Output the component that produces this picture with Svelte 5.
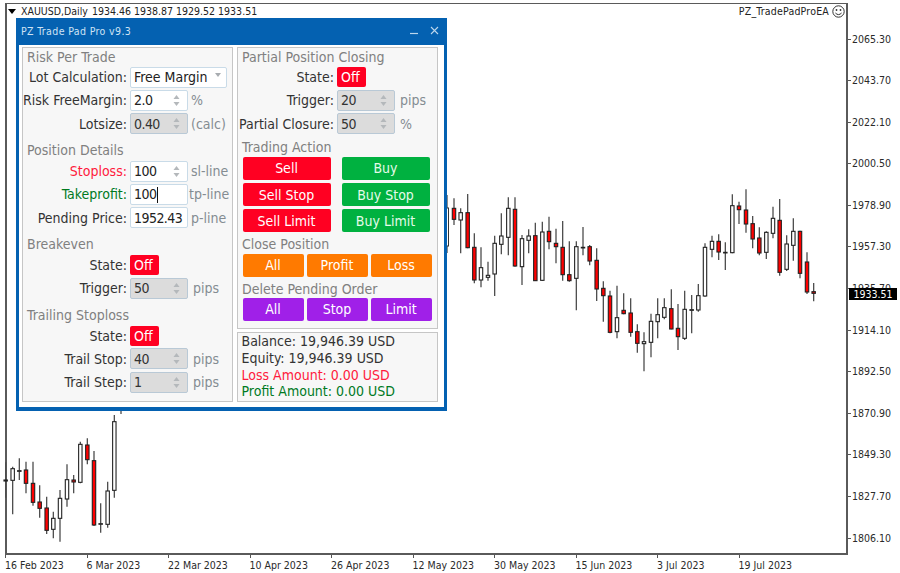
<script>
  // [x, wickTop, wickBottom, bodyTop, bodyBottom, red] in reference crop units (3x), grouped by crop origin
  const crop = (ox, oy, rows) =>
    rows.map(([x, wt, wb, bt, bb, red]) => ({
      x: ox + x / 3,
      wt: oy + wt / 3,
      wb: oy + wb / 3,
      bt: oy + bt / 3,
      bh: Math.max((bb - bt) / 3, 0.6),
      red: !!red
    }));

  const candles = [
    ...crop(0, 405, [
      [17,172,278,225,228,0],[38,185,328,191,226,0],[58,160,225,197,199,0],[78,170,265,195,235,1],
      [99,170,302,235,292,1],[119,241,338,291,310,1],[140,275,387,309,376,1],[160,320,400,340,373,0],
      [180,255,410,280,340,0],[201,178,305,224,282,0],[221,210,265,225,231,1],[241,110,235,118,232,0],
      [262,100,178,120,164,1],[282,138,363,167,360,1],[302,295,383,356,357,0],[323,230,368,258,358,0],
      [343,30,278,50,256,0]
    ]),
    ...crop(445, 170, [
      [27,85,165,115,148,1],[47,115,250,128,150,0],[68,72,235,128,233,1],
      [88,190,340,232,330,1],[108,232,352,293,330,0],[129,275,332,316,322,0],[149,197,378,220,312,0],
      [169,130,253,198,223,0],[190,82,256,115,202,0],[210,82,290,118,288,1],[231,195,345,206,290,0],
      [251,178,250,198,211,0],[271,158,333,197,332,1],[292,155,333,186,331,0],[312,140,238,184,215,1],
      [333,176,280,220,230,1],[353,153,332,232,314,1],[373,214,335,314,332,1],[394,214,421,230,325,0],
      [414,171,256,232,233,0],[434,225,286,230,273,1],[455,235,393,271,357,1],[475,334,455,355,377,1],
      [495,362,490,378,487,1],[516,347,505,443,485,0],[536,370,433,421,431,1],[557,385,500,429,487,1],
      [577,463,548,485,520,1],[597,487,604,515,521,0],[618,431,562,454,517,0],[638,385,505,434,455,0],
      [658,385,448,413,442,0],[679,358,478,416,477,1]
    ]),
    ...crop(665, 280, [
      [39,72,210,145,170,1],[59,32,180,88,175,0],[80,45,160,89,91,0]
    ]),
    ...crop(670, 170, [
      [85,342,425,377,420,0],[105,220,380,232,378,0],[126,197,262,214,238,0],[146,193,270,214,246,1],
      [166,217,300,247,248,0],[187,73,250,107,248,0],[207,95,162,108,119,1],[228,58,188,120,162,1],
      [248,138,235,161,207,1],[268,172,256,204,249,1],[289,184,267,187,247,0],[309,110,205,145,190,0],
      [329,87,317,151,307,1],[350,196,303,222,298,0],[370,145,272,184,226,0],[390,182,325,184,310,1],
      [411,247,372,276,366,1],[431,339,394,365,370,1]
    ])
  ];

  const prices = ['2065.30','2043.70','2022.10','2000.50','1978.90','1957.30','1935.70','1914.10','1892.50','1870.90','1849.30','1827.70','1806.10'];
  const dates = ['16 Feb 2023','6 Mar 2023','22 Mar 2023','10 Apr 2023','26 Apr 2023','12 May 2023','30 May 2023','15 Jun 2023','3 Jul 2023','19 Jul 2023'];
</script>

{#snippet spin()}
  <svg class="spin" width="7" height="13" viewBox="0 0 7 13" aria-hidden="true">
    <path d="M3.5 1 L6.5 5 H0.5 Z M3.5 12 L0.5 8 H6.5 Z" fill="#b4b8bb" />
  </svg>
{/snippet}

{#snippet numField(label, value, unit, opts = {})}
  <div class="row">
    <span class="lab {opts.cls ?? ''}">{label}</span>
    <div class="field {opts.off ? 'off' : ''}">
      <span class="val num">{value}</span>{#if !opts.nospin}{@render spin()}{/if}
    </div>
    <span class="unit {opts.ucls ?? ''}">{unit}</span>
  </div>
{/snippet}

{#snippet stateRow()}
  <div class="row">
    <span class="lab">State:</span>
    <span class="state">Off</span>
  </div>
{/snippet}

<div class="terminal">
  <div class="chart">
    <svg class="candles" viewBox="7 4 839 549" preserveAspectRatio="none" aria-hidden="true">
      <line x1="121" y1="410" x2="121" y2="414" class="wick" />
      <line x1="447" y1="195" x2="447" y2="253" class="wick" />
      <rect x="445.5" y="208" width="3" height="38" fill="#fff" stroke="#333" />
      {#each candles as c}
        <line x1={c.x} y1={c.wt} x2={c.x} y2={c.wb} class="wick" />
        <rect x={c.x - 1.7} y={c.bt} width="3.4" height={c.bh} fill={c.red ? '#f00' : '#fff'} stroke="#222" stroke-width="1.1" />
      {/each}
    </svg>
    <div class="quote">
      <i class="tri"></i>
      <span>XAUUSD,Daily</span>
      <span>1934.46 1938.87 1929.52 1933.51</span>
    </div>
    <div class="ea">
      <span>PZ_TradePadProEA</span>
      <svg width="13" height="13" viewBox="0 0 13 13" aria-hidden="true">
        <circle cx="6.5" cy="6.5" r="5.7" fill="none" stroke="#333" />
        <circle cx="4.5" cy="5" r="0.9" fill="#333" />
        <circle cx="8.5" cy="5" r="0.9" fill="#333" />
        <path d="M3.4 8 Q6.5 11.2 9.6 8" fill="none" stroke="#333" />
      </svg>
    </div>
  </div>

  <div class="price-axis">
    {#each prices as p}
      <div class="price">{p}</div>
    {/each}
  </div>
  <div class="last">1933.51</div>

  <div class="date-axis">
    {#each dates as d}
      <div class="date">{d}</div>
    {/each}
  </div>

  <section class="window">
    <header class="title">
      <span>PZ Trade Pad Pro v9.3</span>
      <div class="ctrls">
        <svg width="9" height="9" viewBox="0 0 9 9" aria-hidden="true"><path d="M0 7.5 H8" stroke="#bcd6ec" stroke-width="1.2" /></svg>
        <svg width="9" height="9" viewBox="0 0 9 9" aria-hidden="true"><path d="M1 1 L8 8 M8 1 L1 8" stroke="#bcd6ec" stroke-width="1.1" /></svg>
      </div>
    </header>
    <div class="client">
      <div class="panel left">
        <h3>Risk Per Trade</h3>
        <div class="row">
          <span class="lab">Lot Calculation:</span>
          <div class="field select"><span class="val">Free Margin</span><i class="caret"></i></div>
        </div>
        {@render numField('Risk FreeMargin:', '2.0', '%')}
        {@render numField('Lotsize:', '0.40', '(calc)', { off: true })}

        <h3 class="gap">Position Details</h3>
        {@render numField('Stoploss:', '100', 'sl-line', { cls: 'red' })}
        <div class="row">
          <span class="lab green">Takeprofit:</span>
          <div class="field"><span class="val num">100</span><i class="cursor"></i></div>
          <span class="unit tight">tp-line</span>
        </div>
        {@render numField('Pending Price:', '1952.43', 'p-line', { nospin: true })}

        <h3 class="gap">Breakeven</h3>
        {@render stateRow()}
        {@render numField('Trigger:', '50', 'pips', { off: true, ucls: 'wide' })}

        <h3 class="gap">Trailing Stoploss</h3>
        {@render stateRow()}
        {@render numField('Trail Stop:', '40', 'pips', { off: true, ucls: 'wide' })}
        {@render numField('Trail Step:', '1', 'pips', { off: true, ucls: 'wide' })}
      </div>

      <div class="stack">
        <div class="panel right">
          <h3>Partial Position Closing</h3>
          {@render stateRow()}
          {@render numField('Trigger:', '20', 'pips', { off: true, ucls: 'wide' })}
          {@render numField('Partial Closure:', '50', '%', { off: true, ucls: 'wide' })}

          <h3 class="sub">Trading Action</h3>
          <div class="two">
            <button class="sell">Sell</button><button class="buy">Buy</button>
            <button class="sell">Sell Stop</button><button class="buy">Buy Stop</button>
            <button class="sell">Sell Limit</button><button class="buy">Buy Limit</button>
          </div>

          <h3 class="sub2">Close Position</h3>
          <div class="three">
            <button class="orange">All</button><button class="orange">Profit</button><button class="orange">Loss</button>
          </div>

          <h3 class="sub3">Delete Pending Order</h3>
          <div class="three">
            <button class="purple">All</button><button class="purple">Stop</button><button class="purple">Limit</button>
          </div>
        </div>
        <div class="panel info">
          <div>Balance: 19,946.39 USD</div>
          <div>Equity: 19,946.39 USD</div>
          <div class="red">Loss Amount: 0.00 USD</div>
          <div class="green">Profit Amount: 0.00 USD</div>
        </div>
      </div>
    </div>
  </section>
</div>

<style>
  :global(body) {
    margin: 0;
    background: #fff;
  }
  .terminal {
    position: relative;
    width: 900px;
    height: 573px;
    overflow: hidden;
    background: #fff;
    display: grid;
    grid-template-columns: 843px 1fr;
    grid-template-rows: 552px 1fr;
    padding: 3px 0 0 5px;
    box-sizing: border-box;
    font-family: "DejaVu Sans", "Noto Sans", sans-serif;
    font-stretch: condensed;
    color: #2a2a2a;
  }
  .chart {
    position: relative;
    border: 1px solid #5a5a5a;
    border-width: 1px 2px 2px 2px;
    box-sizing: border-box;
    display: flex;
    justify-content: space-between;
    align-items: flex-start;
    font-size: 10.5px;
    color: #222;
  }
  .candles {
    position: absolute;
    inset: 0;
    width: 100%;
    height: 100%;
    overflow: visible;
  }
  .wick {
    stroke: #4d4d4d;
    stroke-width: 1.3;
  }
  .quote,
  .ea {
    position: relative;
    display: flex;
    align-items: center;
    height: 14px;
  }
  .quote {
    padding-left: 1px;
  }
  .quote span:nth-of-type(2) {
    margin-left: 4px;
  }
  .tri {
    width: 0;
    height: 0;
    border: 4px solid transparent;
    border-top: 5px solid #000;
    border-bottom: 0;
    margin-right: 5px;
  }
  .ea {
    gap: 3px;
    padding-right: 1px;
    letter-spacing: 0.2px;
  }
  .price-axis {
    display: flex;
    flex-direction: column;
    padding-top: 29.5px;
  }
  .price {
    position: relative;
    height: 41.6px;
    flex: none;
    font-size: 10.5px;
    line-height: 13px;
    padding-left: 4px;
    box-sizing: border-box;
  }
  .price::before {
    content: "";
    position: absolute;
    left: 0;
    top: 6px;
    width: 3px;
    height: 1px;
    background: #555;
  }
  .last {
    position: absolute;
    left: 849px;
    top: 288px;
    width: 48px;
    height: 12px;
    background: #000;
    color: #fff;
    font-size: 10.5px;
    line-height: 12px;
    text-align: center;
  }
  .date-axis {
    grid-column: 1 / 3;
    display: flex;
    padding-top: 1px;
  }
  .date {
    position: relative;
    width: 81.5px;
    flex: none;
    font-size: 10.5px;
    line-height: 13px;
    padding-top: 3px;
    white-space: nowrap;
  }
  .date::before {
    content: "";
    position: absolute;
    left: 0;
    top: -1px;
    width: 1px;
    height: 3px;
    background: #555;
  }

  .window {
    position: absolute;
    left: 16px;
    top: 18px;
    width: 431px;
    height: 393px;
    box-sizing: border-box;
    background: #0461b1;
    padding: 0 3px 4px;
    display: flex;
    flex-direction: column;
  }
  .title {
    height: 25px;
    flex: none;
    display: flex;
    align-items: center;
    justify-content: space-between;
    padding: 0 5px 2px 2px;
    color: #cfe3f4;
    font-size: 10.5px;
    letter-spacing: 0.37px;
  }
  .ctrls {
    display: flex;
    gap: 11px;
  }
  .client {
    flex: 1;
    background: #fff;
    display: flex;
    gap: 4px;
    padding: 2px 6px 5px 3px;
  }
  .panel {
    box-sizing: border-box;
    border: 1.5px solid #c6c6c6;
    background: #f7f7f7;
    font-size: 14px;
  }
  .left {
    width: 211px;
    padding: 0.5px 0 0 1px;
  }
  .stack {
    width: 201px;
    display: flex;
    flex-direction: column;
    gap: 3px;
  }
  .right {
    height: 282px;
    padding: 0.5px 0 0 1px;
  }
  .info {
    flex: 1;
    padding: 0 0 0 3.5px;
    line-height: 16.8px;
    color: #333;
  }
  h3 {
    margin: 0;
    padding-left: 3px;
    height: 17px;
    line-height: 17px;
    font-size: 14px;
    font-weight: 400;
    color: #808080;
    white-space: nowrap;
  }
  h3.gap {
    margin-top: 7px;
  }
  .row {
    height: 23.3px;
    display: grid;
    grid-template-columns: 103px 58px auto;
    column-gap: 3px;
    align-items: center;
  }
  .right .row {
    grid-template-columns: 95px 58px auto;
  }
  .lab {
    justify-self: end;
    white-space: nowrap;
    color: #333;
  }
  .lab.red,
  .info .red {
    color: #ff1a3c;
  }
  .lab.green,
  .info .green {
    color: #007a1f;
  }
  .unit {
    color: #848c92;
    white-space: nowrap;
  }
  .unit.wide {
    padding-left: 2px;
  }
  .unit.tight {
    margin-left: -2px;
  }
  .field {
    position: relative;
    height: 21px;
    box-sizing: border-box;
    background: #fff;
    border: 1px solid #c9dbe8;
    border-radius: 2px;
    display: flex;
    align-items: center;
    justify-content: space-between;
    padding: 0 7px 0 3px;
    color: #222;
  }
  .field.off {
    background: #dcdcdc;
    border-color: #b9c9d6;
    color: #333;
  }
  .field.select {
    width: 97px;
    grid-column: 2 / 4;
    padding-right: 5px;
  }
  .val {
    white-space: nowrap;
  }
  .val.num {
    letter-spacing: -0.55px;
  }
  .spin {
    flex: none;
  }
  .caret {
    width: 0;
    height: 0;
    border: 3.5px solid transparent;
    border-top: 4px solid #a8acb0;
    border-bottom: 0;
    margin-top: -4px;
  }
  .cursor {
    position: absolute;
    left: 26px;
    top: 2px;
    width: 1px;
    height: 16px;
    background: #111;
  }
  .state {
    width: 29px;
    height: 20px;
    line-height: 20px;
    box-sizing: border-box;
    background: #ff0022;
    color: #fff;
    border-radius: 2px;
    padding-left: 4px;
  }
  button {
    height: 23px;
    border: 0;
    border-radius: 2px;
    padding: 0;
    color: #fff;
    font: inherit;
    font-stretch: condensed;
  }
  .sell {
    background: #ff0022;
  }
  .buy {
    background: #00b140;
    color: #e4fbe9;
  }
  .orange {
    background: #ff7a00;
  }
  .purple {
    background: #a020e8;
  }
  .two {
    display: grid;
    grid-template-columns: 88px 88px;
    column-gap: 11px;
    row-gap: 3.3px;
    padding-left: 3.5px;
  }
  .three {
    display: grid;
    grid-template-columns: 61px 61px 61px;
    column-gap: 3px;
    padding-left: 3.5px;
  }
  h3.sub {
    margin-top: 3.5px;
    height: 16px;
    line-height: 16px;
    margin-bottom: 2px;
  }
  h3.sub2 {
    margin-top: 3.5px;
    margin-bottom: 2px;
    height: 16px;
    line-height: 16px;
  }
  h3.sub3 {
    margin-top: 4px;
    margin-bottom: 1px;
    height: 16px;
    line-height: 16px;
  }
</style>
